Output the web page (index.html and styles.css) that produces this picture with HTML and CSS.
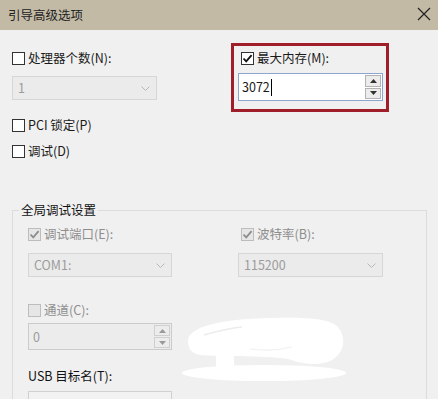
FILE: index.html
```html
<!DOCTYPE html>
<html lang="zh-CN">
<head>
<meta charset="utf-8">
<title>引导高级选项</title>
<link rel="stylesheet" href="styles.css">
</head>
<body>
<div class="window">
  <div class="titlebar">
    <span class="title">引导高级选项</span>
    <svg class="close" width="14" height="14" viewBox="0 0 14 14"><path d="M1 1 L13 13 M13 1 L1 13" stroke="#222" stroke-width="1.2" fill="none"/></svg>
  </div>
  <div class="content">
    <div class="top-grid">
      <div class="field">
        <label class="chk"><span class="box"></span><span>处理器个数(N):</span></label>
        <div class="select"><span>1</span><svg width="9" height="5" viewBox="0 0 9 5"><polyline points="0.5,0.5 4.5,4.5 8.5,0.5" fill="none" stroke="#b8b8b8"/></svg></div>
      </div>
      <div class="field highlight">
        <label class="chk right"><span class="box"><svg width="11" height="11" viewBox="0 0 11 11"><path d="M1.5 5.5 L4.2 8.3 L9.6 2.2" fill="none" stroke="#111" stroke-width="1.8"/></svg></span><span>最大内存(M):</span></label>
        <div class="spin active">
          <div class="val">3072<span class="caret"></span></div>
          <div class="spin-btns">
            <span class="spin-btn"><svg width="7" height="4" viewBox="0 0 7 4"><polygon points="3.5,0 7,4 0,4" fill="#333"/></svg></span>
            <span class="spin-btn"><svg width="7" height="4" viewBox="0 0 7 4"><polygon points="0,0 7,0 3.5,4" fill="#333"/></svg></span>
          </div>
        </div>
      </div>
    </div>
    <div class="checks">
      <label class="chk"><span class="box"></span><span>PCI 锁定(P)</span></label>
      <label class="chk"><span class="box"></span><span>调试(D)</span></label>
    </div>
    <fieldset class="group">
      <legend>全局调试设置</legend>
      <div class="grid2">
        <div class="field">
          <label class="chk dis"><span class="box disabled"><svg width="11" height="11" viewBox="0 0 11 11"><path d="M1.5 5.5 L4.2 8.3 L9.6 2.2" fill="none" stroke="#8d8d8d" stroke-width="1.8"/></svg></span><span>调试端口(E):</span></label>
          <div class="select tall"><span>COM1:</span><svg width="9" height="5" viewBox="0 0 9 5"><polyline points="0.5,0.5 4.5,4.5 8.5,0.5" fill="none" stroke="#b8b8b8"/></svg></div>
        </div>
        <div class="field">
          <label class="chk dis right"><span class="box disabled"><svg width="11" height="11" viewBox="0 0 11 11"><path d="M1.5 5.5 L4.2 8.3 L9.6 2.2" fill="none" stroke="#8d8d8d" stroke-width="1.8"/></svg></span><span>波特率(B):</span></label>
          <div class="select tall"><span>115200</span><svg width="9" height="5" viewBox="0 0 9 5"><polyline points="0.5,0.5 4.5,4.5 8.5,0.5" fill="none" stroke="#b8b8b8"/></svg></div>
        </div>
      </div>
      <div class="field channel">
        <label class="chk dis"><span class="box disabled"></span><span>通道(C):</span></label>
        <div class="spin off">
          <div class="val">0</div>
          <div class="spin-btns">
            <span class="spin-btn"><svg width="7" height="4" viewBox="0 0 7 4"><polygon points="3.5,0 7,4 0,4" fill="#9a9a9a"/></svg></span>
            <span class="spin-btn"><svg width="7" height="4" viewBox="0 0 7 4"><polygon points="0,0 7,0 3.5,4" fill="#9a9a9a"/></svg></span>
          </div>
        </div>
      </div>
      <div class="usb-label">USB 目标名(T):</div>
      <div class="usb-input"></div>
    </fieldset>
  </div>
  <svg class="scribble" width="170" height="72" viewBox="0 0 170 72">
    <path d="M8 28 C 8 14, 40 6, 90 5 C 130 4, 150 6, 158 14 C 166 24, 166 40, 150 48 C 135 54, 120 50, 108 46 C 80 42, 40 44, 20 42 C 10 40, 8 34, 8 28 Z" fill="#ffffff"/>
    <path d="M24 22 C 38 18, 52 15, 62 14" fill="none" stroke="#ececec" stroke-width="1.5"/>
    <path d="M70 36 C 85 38, 100 37, 112 34" fill="none" stroke="#f0f0f0" stroke-width="1.2"/>
    <rect x="36" y="38" width="18" height="18" fill="#ffffff"/>
    <ellipse cx="84" cy="60" rx="82" ry="8" fill="#ffffff"/>
  </svg>
</div>
</body>
</html>
```

FILE: styles.css
```css
* { box-sizing: border-box; }

body {
  margin: 0;
  background: #f0f0f0;
  font-family: "Noto Sans CJK SC", "Noto Sans", sans-serif;
  font-size: 12.5px;
  color: #1a1a1a;
}

.window {
  width: 438px;
  height: 399px;
  overflow: hidden;
  position: relative;
  background: #f0f0f0;
}

.titlebar {
  height: 30px;
  background: #c2baa5;
  display: flex;
  align-items: center;
  justify-content: space-between;
  padding: 0 7px 0 8px;
}

.title {
  font-size: 12.5px;
  line-height: 16px;
  color: #222;
}

.close { display: block; margin-top: -2px; }

.content {
  padding: 18px 11px 0 12px;
}

.top-grid {
  display: grid;
  grid-template-columns: 145px 145px;
  column-gap: 81px;
}

.field {
  display: flex;
  flex-direction: column;
}

.chk {
  display: flex;
  align-items: center;
  height: 20px;
  line-height: 20px;
  gap: 3px;
  white-space: nowrap;
}

.chk.right { padding-left: 3px; }
.chk.dis { color: #8e8e8e; }

.box {
  width: 13px;
  height: 13px;
  border: 1px solid #333;
  background: #fff;
  flex: none;
  display: flex;
  align-items: center;
  justify-content: center;
}

.box svg { display: block; }

.box.disabled {
  border-color: #bdbdbd;
  background: #e6e6e6;
}

.select {
  height: 24px;
  margin-top: 8px;
  border: 1px solid #d6d6d6;
  background: #ebebeb;
  color: #9c9c9c;
  display: flex;
  align-items: center;
  justify-content: space-between;
  padding: 0 6px 0 5px;
  line-height: 20px;
}

.select.tall { margin-top: 9px; }

.spin {
  height: 28px;
  margin-top: 5px;
  display: flex;
  line-height: 20px;
}

.spin.active {
  border: 1px solid #8ea6cf;
  background: #fff;
}

.spin.off {
  height: 27px;
  margin-top: 3px;
  border: 1px solid #cbcbcb;
  background: #ececec;
  color: #9c9c9c;
}

.val {
  flex: 1;
  padding-left: 3px;
  display: flex;
  align-items: center;
}

.spin.off .val { padding-left: 4px; }

.caret {
  width: 1px;
  height: 17px;
  background: #000;
  margin-left: 1px;
}

.spin-btns {
  width: 17px;
  display: flex;
  flex-direction: column;
  padding: 1px 1px 1px 0;
  gap: 1px;
}

.spin-btn {
  flex: 1;
  border: 1px solid #b3b3b3;
  background: #ececec;
  display: flex;
  align-items: center;
  justify-content: center;
}

.spin.off .spin-btn { border-color: #cfcfcf; }

.highlight { position: relative; }

.highlight::after {
  content: "";
  position: absolute;
  left: -7px;
  right: -6px;
  top: -5px;
  bottom: -11px;
  border: 3px solid #a01e2a;
}

.checks {
  margin-top: 14px;
  display: flex;
  flex-direction: column;
  gap: 6px;
}

.group {
  margin: 41px 0 0 0;
  padding: 0 0 0 15px;
  border: 1px solid #dcdcdc;
  min-width: 0;
}

.group legend {
  margin-left: -9px;
  padding: 0 2px;
  line-height: 16px;
  color: #111;
}

.grid2 {
  display: grid;
  grid-template-columns: 144px 145px;
  column-gap: 66px;
  margin-top: 6px;
}

.channel {
  width: 144px;
  margin-top: 23px;
}

.usb-label {
  margin-top: 16px;
  height: 20px;
  line-height: 20px;
  color: #111;
}

.usb-input {
  width: 144px;
  height: 24px;
  margin-top: 5px;
  border: 1px solid #d0d0d0;
  background: #f2f2f2;
}

.scribble {
  position: absolute;
  left: 180px;
  top: 313px;
}
```
